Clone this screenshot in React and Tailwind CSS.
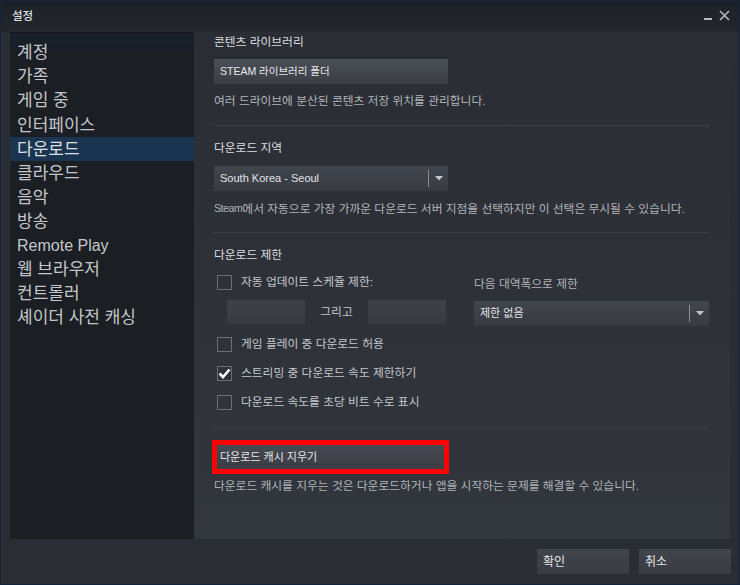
import { useState } from 'react'

const menu = ['계정', '가족', '게임 중', '인터페이스', '다운로드', '클라우드', '음악', '방송', 'Remote Play', '웹 브라우저', '컨트롤러', '셰이더 사전 캐싱']

const Caret = () => (
    <svg width="8" height="5" viewBox="0 0 8 5" className="block">
        <path d="M0 0 H8 L4 4.5 Z" fill="#c3c6ca" />
    </svg>
)

const Dropdown = ({ label, className }) => (
    <div className={`h-[25px] flex items-center bg-linear-to-b from-[#41454d] to-[#383b42] ${className}`}>
        <span className="flex-1 pl-[6px] text-[11px] text-[#e2e4e6] truncate">{label}</span>
        <div className="w-px h-[17px] bg-[#8a8e94]" />
        <div className="w-[19px] flex justify-center">
            <Caret />
        </div>
    </div>
)

const Checkbox = ({ checked, label }) => (
    <div className="h-[20px] flex items-center pl-[3px]">
        <div className="w-[15px] h-[15px] border border-[#6b6f75] flex items-center justify-center">
            {checked && (
                <svg width="13" height="11" viewBox="0 0 13 11">
                    <path d="M1.5 5.5 L5 9 L11.5 1.5" fill="none" stroke="#ffffff" strokeWidth="2.6" />
                </svg>
            )}
        </div>
        <span className="ml-[9px] text-[11.75px] text-[#c4c8cc]">{label}</span>
    </div>
)

const Separator = ({ className }) => <div className={`h-px w-[495px] bg-[#3c4047] ${className}`} />

export default function App() {
    const [active, setActive] = useState('다운로드')
    const [streaming, setStreaming] = useState(true)

    return (
        <div className="w-[740px] h-[585px] flex flex-col border border-[#15243a] bg-[#2a2d33] font-['Liberation_Sans','Noto_Sans_CJK_KR',sans-serif] select-none overflow-hidden">
            {/* title bar */}
            <div className="h-[31px] shrink-0 flex items-center justify-between pl-[11px] pr-[9px] bg-linear-to-b from-[#1d2127] to-[#23262c]">
                <span className="text-[11.5px] font-medium text-[#dfe2e5]">설정</span>
                <div className="flex items-end gap-[7px] pb-[2px]">
                    <div className="w-[8px] h-[2px] bg-[#b5b8bc] mb-[1px]" />
                    <svg width="11" height="11" viewBox="0 0 11 11">
                        <path d="M1 1 L10 10 M10 1 L1 10" stroke="#b5b8bc" strokeWidth="1.6" />
                    </svg>
                </div>
            </div>

            {/* body */}
            <div className="h-[507px] shrink-0 flex pl-[9px] pr-[9px]">
                {/* sidebar */}
                <div className="w-[184px] shrink-0 border-t border-[#111418] bg-[linear-gradient(to_bottom,#19202c_0px,#1b1e22_24px)] pt-[8px]">
                    {menu.map(item => (
                        <div
                            key={item}
                            onClick={() => setActive(item)}
                            className={`h-[24.1px] flex items-center pl-[7px] cursor-pointer ${item === 'Remote Play' ? 'text-[16px]' : 'text-[17px]'} ${active === item ? 'bg-[#1a3452] text-[#dde0e3]' : 'text-[#c3c7cb]'}`}
                        >
                            {item}
                        </div>
                    ))}
                </div>

                {/* content */}
                <div className="flex-1 flex flex-col pl-[20px] bg-linear-to-b from-[#2a2d33] to-[#32363d]">
                    <div className="h-[20px] flex items-center text-[11.75px] text-[#dcdee0]">콘텐츠 라이브러리</div>
                    <div className="mt-[7px] w-[234px] h-[25px] flex items-center pl-[6px] text-[10.5px] text-[#e6e8ea] bg-linear-to-b from-[#4b5058] to-[#3a3d44]">
                        STEAM 라이브러리 폴더
                    </div>
                    <div className="mt-[7px] h-[20px] flex items-center text-[11.75px] text-[#b0b4b9]">
                        여러 드라이브에 분산된 콘텐츠 저장 위치를 관리합니다.
                    </div>
                    <Separator className="mt-[14px]" />

                    <div className="mt-[12px] h-[20px] flex items-center text-[11.75px] text-[#dcdee0]">다운로드 지역</div>
                    <Dropdown label="South Korea - Seoul" className="mt-[8px] w-[234px]" />
                    <div className="mt-[8px] h-[20px] flex items-center text-[11.75px] text-[#b0b4b9] whitespace-nowrap">
                        <span className="text-[10.5px] tracking-[-0.4px]">Steam</span>에서 자동으로 가장 가까운 다운로드 서버 지점을 선택하지만 이 선택은 무시될 수 있습니다.
                    </div>
                    <Separator className="mt-[13px]" />

                    <div className="mt-[12px] h-[20px] flex items-center text-[11.75px] text-[#dcdee0]">다운로드 제한</div>
                    <div className="mt-[7px] flex">
                        <div className="w-[260px] flex flex-col">
                            <Checkbox label="자동 업데이트 스케쥴 제한:" />
                            <div className="mt-[8px] flex items-center pl-[13px]">
                                <div className="w-[78px] h-[24px] bg-linear-to-b from-[#3f424a] to-[#373a41]" />
                                <span className="w-[63px] text-center text-[11.75px] text-[#c4c8cc]">그리고</span>
                                <div className="w-[78px] h-[24px] bg-linear-to-b from-[#3f424a] to-[#373a41]" />
                            </div>
                        </div>
                        <div className="flex flex-col pt-[2px]">
                            <div className="h-[20px] flex items-center text-[11.75px] text-[#b0b4b9]">다음 대역폭으로 제한</div>
                            <Dropdown label="제한 없음" className="mt-[7px] w-[235px]" />
                        </div>
                    </div>

                    <div className="mt-[8px] flex flex-col gap-[9px]">
                        <Checkbox label="게임 플레이 중 다운로드 허용" />
                        <div onClick={() => setStreaming(s => !s)} className="cursor-pointer">
                            <Checkbox checked={streaming} label="스트리밍 중 다운로드 속도 제한하기" />
                        </div>
                        <Checkbox label="다운로드 속도를 초당 비트 수로 표시" />
                    </div>
                    <Separator className="mt-[15px]" />

                    <div className="mt-[12px] -ml-[2px] w-[237px] h-[34px] border-[5px] border-[#ff0000]">
                        <div className="h-full flex items-center pl-[3px] text-[11px] text-[#e6e8ea] bg-linear-to-b from-[#464a52] to-[#3a3d44]">
                            다운로드 캐시 지우기
                        </div>
                    </div>
                    <div className="mt-[2px] h-[20px] flex items-center text-[11.75px] text-[#b0b4b9] whitespace-nowrap">
                        다운로드 캐시를 지우는 것은 다운로드하거나 앱을 시작하는 문제를 해결할 수 있습니다.
                    </div>
                </div>
            </div>

            {/* footer */}
            <div className="flex-1 flex justify-end items-start pt-[10px] pr-[8px] gap-[10px]">
                <button className="w-[92px] h-[25px] text-left pl-[6px] text-[12px] text-[#e2e4e6] bg-linear-to-b from-[#40444c] to-[#393c43]">확인</button>
                <button className="w-[92px] h-[25px] text-left pl-[6px] text-[12px] text-[#e2e4e6] bg-linear-to-b from-[#40444c] to-[#393c43]">취소</button>
            </div>
        </div>
    )
}
